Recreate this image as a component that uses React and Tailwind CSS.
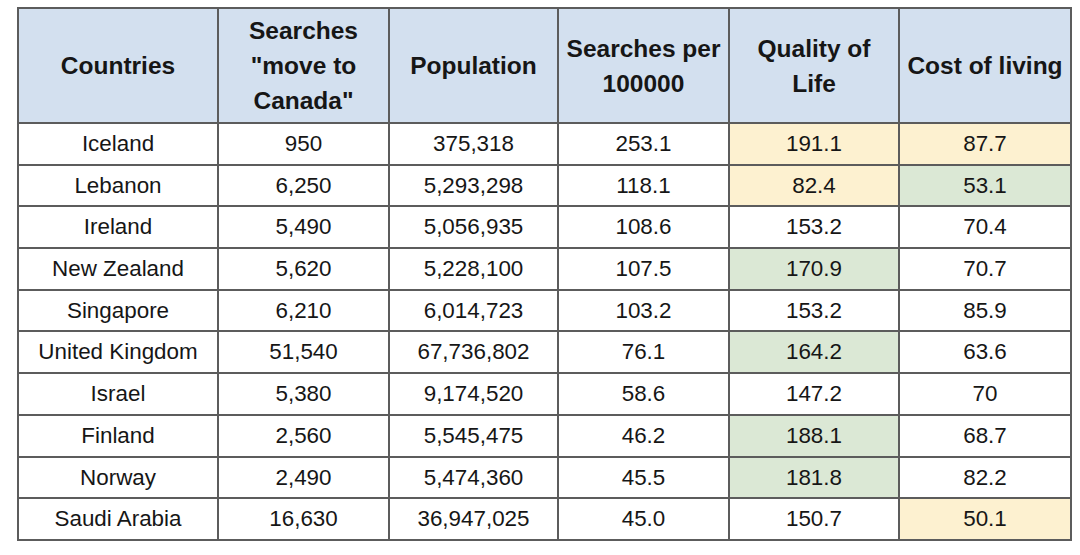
import React from "react";

const rows = [
  ["Iceland", "950", "375,318", "253.1", ["191.1", "y"], ["87.7", "y"]],
  ["Lebanon", "6,250", "5,293,298", "118.1", ["82.4", "y"], ["53.1", "g"]],
  ["Ireland", "5,490", "5,056,935", "108.6", ["153.2", ""], ["70.4", ""]],
  ["New Zealand", "5,620", "5,228,100", "107.5", ["170.9", "g"], ["70.7", ""]],
  ["Singapore", "6,210", "6,014,723", "103.2", ["153.2", ""], ["85.9", ""]],
  ["United Kingdom", "51,540", "67,736,802", "76.1", ["164.2", "g"], ["63.6", ""]],
  ["Israel", "5,380", "9,174,520", "58.6", ["147.2", ""], ["70", ""]],
  ["Finland", "2,560", "5,545,475", "46.2", ["188.1", "g"], ["68.7", ""]],
  ["Norway", "2,490", "5,474,360", "45.5", ["181.8", "g"], ["82.2", ""]],
  ["Saudi Arabia", "16,630", "36,947,025", "45.0", ["150.7", ""], ["50.1", "y"]],
];

function bgFor(k) {
  if (k === "y") return "bg-[#fdf1d0]";
  if (k === "g") return "bg-[#dbe8d5]";
  return "bg-white";
}

export default function App() {
  const td = "border-2 border-[#5c5c5c] text-center align-middle p-0";
  return (
    <div className="w-[1080px] h-[555px] bg-white pt-[7px] pl-[17px]" style={{ fontFamily: '"Liberation Sans", Arial, sans-serif' }}>
      <table className="border-collapse text-[#161616] table-fixed w-[1053px]">
        <colgroup>
          <col className="w-[200px]" />
          <col className="w-[171px]" />
          <col className="w-[169px]" />
          <col className="w-[171px]" />
          <col className="w-[170px]" />
          <col className="w-[172px]" />
        </colgroup>
        <thead>
          <tr className="h-[115px] bg-[#d3e0ef]">
            <th className={`${td} font-bold text-[24.5px] leading-[35px]`}>Countries</th>
            <th className={`${td} font-bold text-[24.5px] leading-[35px]`}>
              Searches<br />"move to<br />Canada"
            </th>
            <th className={`${td} font-bold text-[24.5px] leading-[35px]`}>Population</th>
            <th className={`${td} font-bold text-[24.5px] leading-[35px]`}>
              Searches per<br />100000
            </th>
            <th className={`${td} font-bold text-[24.5px] leading-[35px]`}>
              Quality of<br />Life
            </th>
            <th className={`${td} font-bold text-[24.5px] leading-[35px] whitespace-nowrap`}>Cost of living</th>
          </tr>
        </thead>
        <tbody>
          {rows.map((r, i) => (
            <tr key={i} className="h-[41.7px] text-[22.4px]">
              <td className={`${td} bg-white`}>{r[0]}</td>
              <td className={`${td} bg-white`}>{r[1]}</td>
              <td className={`${td} bg-white`}>{r[2]}</td>
              <td className={`${td} bg-white`}>{r[3]}</td>
              <td className={`${td} ${bgFor(r[4][1])}`}>{r[4][0]}</td>
              <td className={`${td} ${bgFor(r[5][1])}`}>{r[5][0]}</td>
            </tr>
          ))}
        </tbody>
      </table>
    </div>
  );
}
